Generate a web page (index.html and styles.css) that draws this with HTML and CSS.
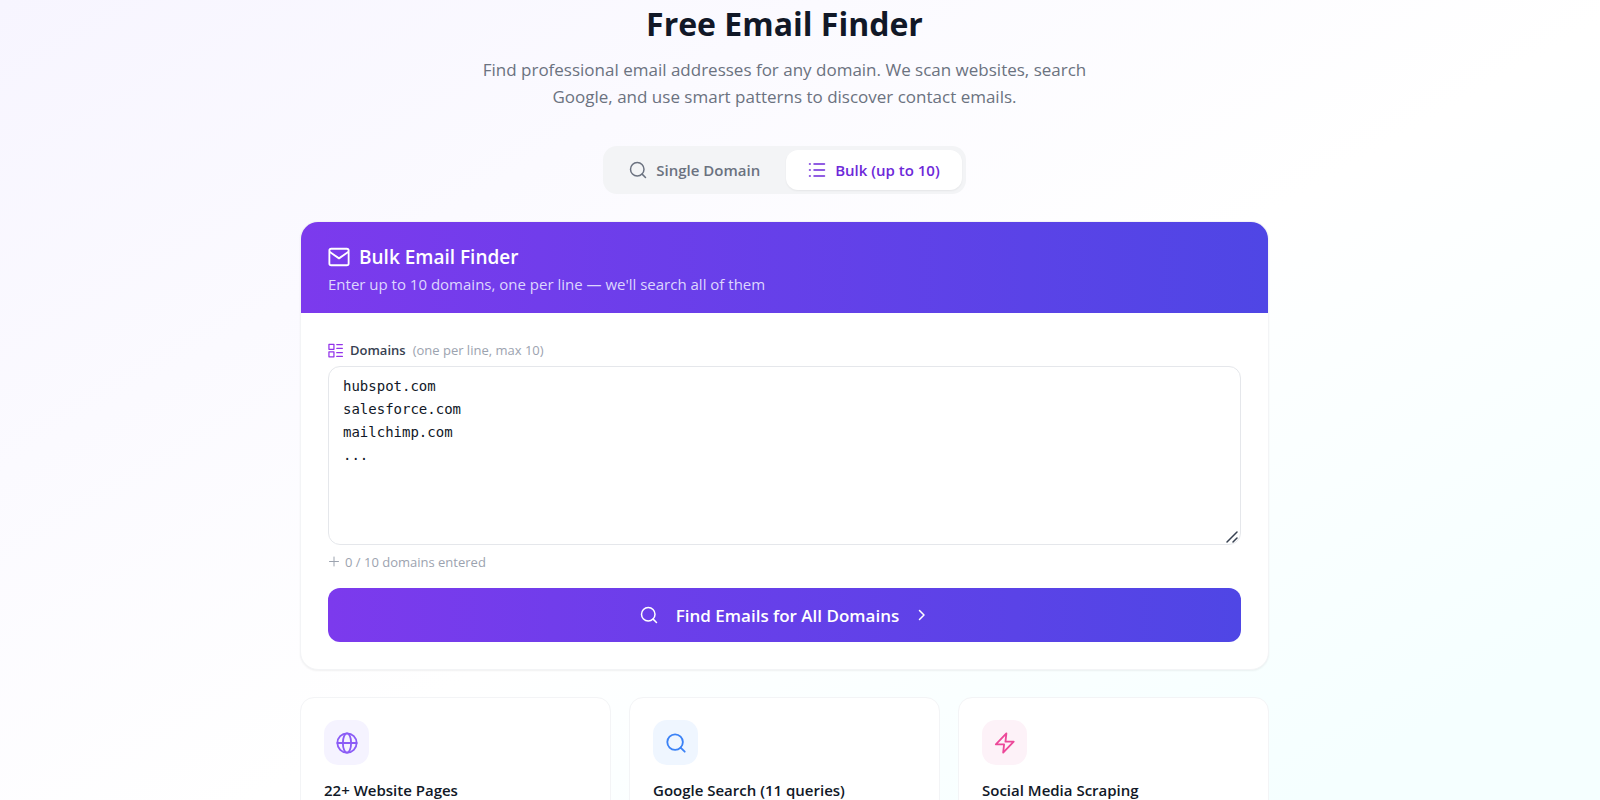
FILE: index.html
```html
<!DOCTYPE html>
<html lang="en">
<head>
<meta charset="UTF-8" />
<meta name="viewport" content="width=device-width, initial-scale=1" />
<title>Free Email Finder</title>
<link rel="stylesheet" href="styles.css">
</head>
<body>
<main class="page">
  <header class="hero">
    <h1>Free Email Finder</h1>
    <p>Find professional email addresses for any domain. We scan websites, search Google, and use smart patterns to discover contact emails.</p>
  </header>

  <div class="tabs">
    <button type="button" class="tab">
      <svg class="icon" viewBox="0 0 24 24"><circle cx="11" cy="11" r="9" /><path d="M17.5 17.5 22 22" /></svg>
      Single Domain
    </button>
    <button type="button" class="tab active">
      <svg class="icon" viewBox="0 0 24 24"><path d="M8 4h14M8 12h14M8 20h14M2 4h1M2 12h1M2 20h1" /></svg>
      Bulk (up to 10)
    </button>
  </div>

  <section class="card">
    <div class="card-header">
      <h2>
        <svg class="icon icon-lg" viewBox="0 0 24 24"><rect x="1.5" y="3" width="21" height="18" rx="2" /><path d="M2 6.5 12 13.5 22 6.5" /></svg>
        Bulk Email Finder
      </h2>
      <p>Enter up to 10 domains, one per line — we'll search all of them</p>
    </div>
    <form class="card-body">
      <label for="domains">
        <svg class="icon icon-sm" viewBox="0 0 24 24"><rect x="1.5" y="2" width="8" height="8" /><rect x="1.5" y="14" width="8" height="8" /><path d="M14 2.5h9M14 8.5h9M14 15.5h9M14 21.5h9" /></svg>
        Domains <span class="hint">(one per line, max 10)</span>
      </label>
      <textarea id="domains" placeholder="hubspot.com
salesforce.com
mailchimp.com
..."></textarea>
      <div class="counter">
        <svg class="icon icon-xs" viewBox="0 0 12 12"><path d="M6 1v9M1.500 5.500h9" /></svg>
        0 / 10 domains entered
      </div>
      <button type="button" class="submit">
        <svg class="icon" viewBox="0 0 24 24"><circle cx="11" cy="11" r="9" /><path d="M17.5 17.5 22 22" /></svg>
        Find Emails for All Domains
        <svg class="icon icon-xs chevron" viewBox="0 0 12 12"><path d="M2.500 1.500 7 6 2.500 10.500" /></svg>
      </button>
    </form>
  </section>

  <div class="features">
    <article class="feature">
      <div class="feature-icon purple">
        <svg class="icon icon-lg" viewBox="0 0 24 24"><circle cx="12" cy="12" r="10.5" /><ellipse cx="12" cy="12" rx="4.5" ry="10.5" /><path d="M1.5 12h21" /></svg>
      </div>
      <h3>22+ Website Pages</h3>
    </article>
    <article class="feature">
      <div class="feature-icon blue">
        <svg class="icon icon-lg" viewBox="0 0 24 24"><circle cx="11" cy="11" r="8.5" /><path d="M17 17 21.5 21.5" /></svg>
      </div>
      <h3>Google Search (11 queries)</h3>
    </article>
    <article class="feature">
      <div class="feature-icon pink">
        <svg class="icon icon-lg" viewBox="0 0 24 24"><path d="M13.500 1.500 2 13.500H11L10 22.500 21.500 10.500H12.500z" /></svg>
      </div>
      <h3>Social Media Scraping</h3>
    </article>
  </div>
</main>
</body>
</html>
```

FILE: styles.css
```css
* {
  box-sizing: border-box;
}
body {
  font-family: "Open Sans", "Noto Sans", sans-serif;
  margin: 0;
  padding: 0 31px 0 0;
  height: 100vh;
  overflow: hidden;
  color: #111827;
  background: linear-gradient(150deg, #f7f5ff 0%, #ffffff 55%, #f5ffff 90%);
}
h1, h2, h3, p {
  margin: 0;
}
.page {
  max-width: 969px;
  margin: 0 auto;
}
.icon {
  width: 18px;
  height: 18px;
  flex: none;
  fill: none;
  stroke: currentColor;
  stroke-width: 2;
  stroke-linecap: round;
  stroke-linejoin: round;
}
.icon-lg {
  width: 22px;
  height: 22px;
}
.icon-sm {
  width: 15px;
  height: 15px;
}
.icon-xs {
  width: 12px;
  height: 12px;
  stroke-width: 1;
}

/* Title */
.hero {
  text-align: center;
}
.hero h1 {
  font-size: 32px;
  line-height: 48px;
  font-weight: 700;
}
.hero p {
  max-width: 640px;
  margin: 8px auto 0;
  font-size: 17px;
  line-height: 27px;
  color: #6b7280;
}

/* Tabs */
.tabs {
  display: flex;
  gap: 4px;
  width: fit-content;
  margin: 36px auto 27px;
  padding: 4px;
  background: #f3f4f6;
  border-radius: 14px;
}
.tab {
  display: flex;
  align-items: center;
  gap: 9px;
  height: 40px;
  padding: 0 22px;
  border: 0;
  border-radius: 12px;
  background: none;
  font: 600 15px "Open Sans", sans-serif;
  color: #6b7280;
}
.tab.active {
  background: #fff;
  color: #6d28d9;
  box-shadow: 0 1px 2px rgba(0,0,0,0.06);
}

/* Form card */
.card {
  background: #fff;
  border: 1px solid #f3f4f6;
  border-radius: 18px;
  overflow: hidden;
  box-shadow: 0 1px 2px rgba(0,0,0,0.06);
}
.card-header {
  padding: 21px 27px 17px;
  color: #fff;
  background: linear-gradient(90deg, #7c3aed, #4f46e5);
}
.card-header h2 {
  display: flex;
  align-items: center;
  gap: 9px;
  font-size: 19px;
  line-height: 28px;
  font-weight: 600;
}
.card-header p {
  margin-top: 1px;
  font-size: 15px;
  line-height: 24px;
  color: #ddd6fe;
}
.card-body {
  padding: 27px;
}
.card-body label {
  display: flex;
  align-items: center;
  gap: 7px;
  margin-bottom: 6px;
  font-size: 13px;
  line-height: 20px;
  font-weight: 600;
  color: #374151;
}
.card-body label .icon {
  color: #9333ea;
}
.hint {
  font-weight: 400;
  color: #9ca3af;
}
textarea {
  display: block;
  width: 100%;
  height: 179px;
  padding: 8px 14px;
  border: 1px solid #e5e7eb;
  border-radius: 12px;
  background: #fff;
  font: 14px/23px "DejaVu Sans Mono", monospace;
  color: #111827;
  resize: vertical;
}
textarea::placeholder {
  color: #111827;
}
textarea::-webkit-resizer {
  background: url("data:image/svg+xml,%3Csvg xmlns='http://www.w3.org/2000/svg' viewBox='0 0 15 15'%3E%3Cpath d='M2 13 12 3M8 13 12 9' stroke='%23374151' stroke-width='1.5' stroke-linecap='round'/%3E%3C/svg%3E") no-repeat center / 100%;
}
.counter {
  display: flex;
  align-items: center;
  gap: 5px;
  margin: 7px 0 16px;
  font-size: 13px;
  line-height: 20px;
  color: #9ca3af;
}
.submit {
  display: flex;
  align-items: center;
  justify-content: center;
  gap: 18px;
  width: 100%;
  height: 54px;
  border: 0;
  border-radius: 12px;
  background: linear-gradient(90deg, #7c3aed, #4f46e5);
  font: 600 17px "Open Sans", sans-serif;
  color: #fff;
}
.chevron {
  stroke-width: 1.5;
}

/* Feature cards */
.features {
  display: grid;
  grid-template-columns: repeat(3, 1fr);
  gap: 18px;
  margin-top: 27px;
}
.feature {
  padding: 22px 23px;
  background: #fff;
  border: 1px solid #f3f4f6;
  border-radius: 14px;
}
.feature-icon {
  display: grid;
  place-items: center;
  width: 45px;
  height: 45px;
  margin-bottom: 14px;
  border-radius: 14px;
}
.feature-icon.purple {
  background: #f5f3ff;
  color: #8b5cf6;
}
.feature-icon.blue {
  background: #eff6ff;
  color: #3b82f6;
}
.feature-icon.pink {
  background: #fdf2f8;
  color: #ec4899;
}
.feature h3 {
  font-size: 15px;
  line-height: 22px;
  font-weight: 600;
}
```
